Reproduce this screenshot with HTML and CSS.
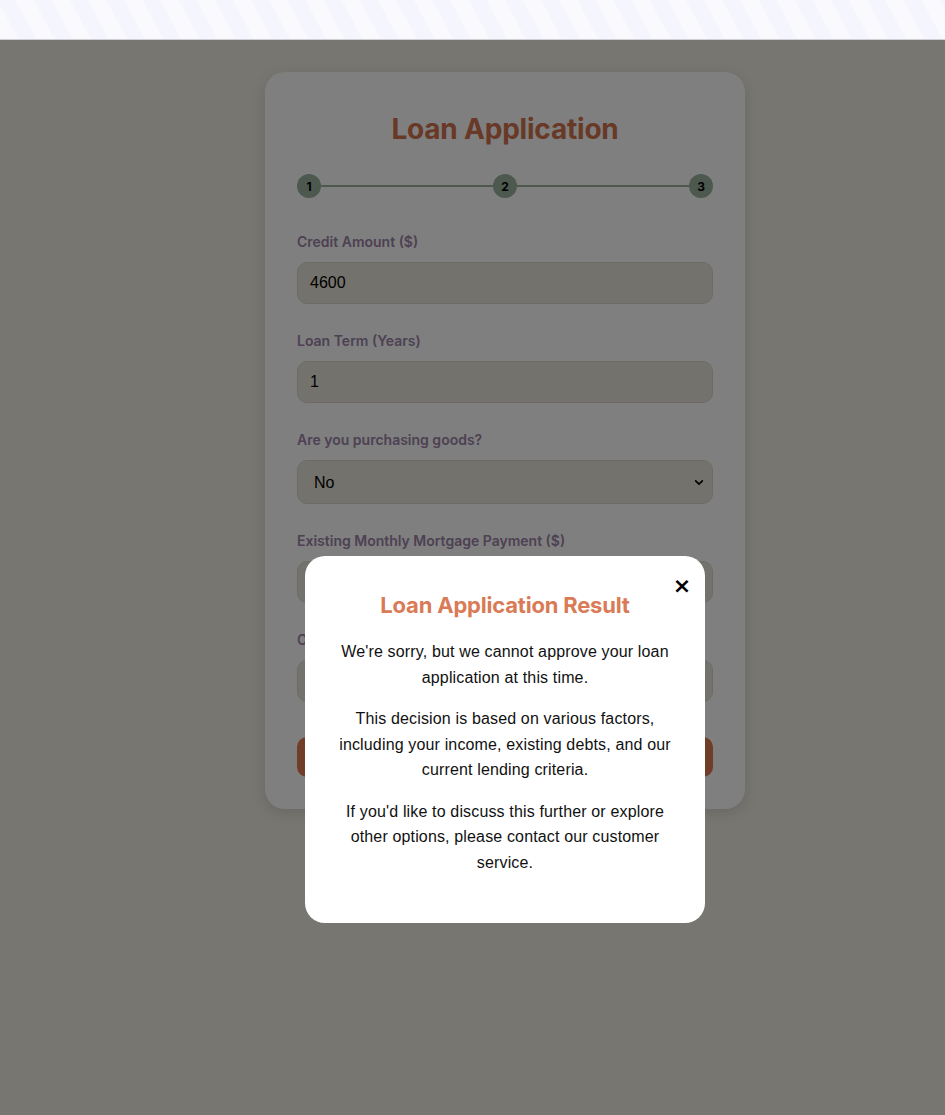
FILE: index.html
```html
<!DOCTYPE html>
<html lang="en">
<head>
<meta charset="utf-8">
<title>Loan Application</title>
<link rel="stylesheet" href="styles.css">
</head>
<body>
<header class="topbar"></header>
<main class="page">
  <section class="card">
    <h1 class="card-title">Loan Application</h1>
    <div class="steps">
      <span class="step">1</span>
      <span class="step-line"></span>
      <span class="step">2</span>
      <span class="step-line"></span>
      <span class="step">3</span>
    </div>
    <form class="form">
      <div class="field">
        <label class="label">Credit Amount ($)</label>
        <input class="input" type="text" value="4600">
      </div>
      <div class="field">
        <label class="label">Loan Term (Years)</label>
        <input class="input" type="text" value="1">
      </div>
      <div class="field">
        <label class="label">Are you purchasing goods?</label>
        <select class="input select"><option>No</option><option>Yes</option></select>
      </div>
      <div class="field">
        <label class="label">Existing Monthly Mortgage Payment ($)</label>
        <input class="input" type="text" value="">
      </div>
      <div class="field">
        <label class="label">Other Monthly Debt Payments ($)</label>
        <input class="input" type="text" value="">
      </div>
      <button class="submit" type="button">Submit</button>
    </form>
  </section>
</main>
<div class="overlay">
  <div class="modal">
    <button class="close" type="button">&times;</button>
    <h2 class="modal-title">Loan Application Result</h2>
    <p>We're sorry, but we cannot approve your loan application at this time.</p>
    <p>This decision is based on various factors, including your income, existing debts, and our current lending criteria.</p>
    <p>If you'd like to discuss this further or explore other options, please contact our customer service.</p>
  </div>
</div>
</body>
</html>
```
FILE: styles.css
```css
* { box-sizing: border-box; }
html, body { margin: 0; padding: 0; }
body {
  background: #f0ece0;
  font-family: Inter, "Liberation Sans", Arial, sans-serif;
  min-height: 1115px;
}
.topbar {
  position: relative;
  z-index: 20;
  height: 40px;
  border-bottom: 1px solid #cfcfd4;
  background: repeating-linear-gradient(62deg, #f9f9fe 0px, #f9f9fe 16px, #f4f5fd 16px, #f4f5fd 32px);
}
.page {
  display: flex;
  justify-content: center;
  padding: 32px 0 0 65px;
}
.card {
  width: 480px;
  background: #fff;
  border-radius: 20px;
  box-shadow: 0 4px 14px rgba(0,0,0,0.12);
  padding: 32px 32px 32px;
}
.card-title {
  margin: 8px 0 28px;
  text-align: center;
  font-size: 28px;
  line-height: 34px;
  font-weight: 700;
  color: #d0734e;
  letter-spacing: -0.2px;
}
.steps {
  display: flex;
  align-items: center;
  margin-bottom: 34px;
}
.step {
  width: 24px;
  height: 24px;
  border-radius: 50%;
  background: #9ab29e;
  color: #000;
  font-size: 12px;
  font-weight: 700;
  display: flex;
  align-items: center;
  justify-content: center;
  flex: none;
}
.step-line {
  flex: 1;
  height: 2px;
  background: #9ab29e;
}
.field { margin-bottom: 27px; }
.label {
  display: block;
  font-size: 14px;
  line-height: 20px;
  font-weight: 600;
  color: #9a82a6;
  margin-bottom: 10px;
}
.input {
  display: block;
  width: 100%;
  height: 42px;
  padding: 0 12px;
  border: 1px solid #dcd7c9;
  border-radius: 10px;
  background: #e9e5d9;
  font-family: "Liberation Sans", Arial, sans-serif;
  font-size: 16px;
  color: #000;
}
.select {
  height: 44px;
  padding: 0 16px;
  appearance: none;
  -webkit-appearance: none;
  background-image: url("data:image/svg+xml;utf8,<svg xmlns='http://www.w3.org/2000/svg' width='12' height='8' viewBox='0 0 12 8'><path d='M2 2l4 4 4-4' fill='none' stroke='black' stroke-width='2' stroke-linecap='round' stroke-linejoin='round'/></svg>");
  background-repeat: no-repeat;
  background-position: right 8px center;
  background-size: 10px 7px;
}
.submit {
  display: block;
  width: 100%;
  height: 40px;
  margin-top: 35px;
  border: none;
  border-radius: 10px;
  background: #e07a52;
  color: #fff;
  font-size: 16px;
  font-weight: 600;
  font-family: Inter, "Liberation Sans", Arial, sans-serif;
}
.overlay {
  position: fixed;
  top: 40px;
  left: 0;
  right: 0;
  bottom: 0;
  background: rgba(0,0,0,0.5);
  z-index: 10;
  display: flex;
  justify-content: center;
  padding: 516px 0 0 65px;
}
.modal {
  position: relative;
  width: 400px;
  height: 367px;
  background: #fff;
  border-radius: 20px;
  padding: 36px 30px 32px;
  text-align: center;
  color: #111;
}
.close {
  position: absolute;
  top: 16px;
  right: 9px;
  width: 28px;
  height: 28px;
  border: none;
  background: none;
  font-size: 22px;
  line-height: 28px;
  font-weight: 700;
  color: #000;
  padding: 0;
  font-family: "DejaVu Sans", Arial, sans-serif;
}
.modal-title {
  margin: 0 0 20px;
  font-size: 22px;
  line-height: 27px;
  font-weight: 700;
  color: #d97b56;
  letter-spacing: -0.2px;
}
.modal p {
  margin: 0 0 16px;
  font-family: "Liberation Sans", Arial, sans-serif;
  font-size: 16px;
  line-height: 25.5px;
  letter-spacing: 0.15px;
}
```
